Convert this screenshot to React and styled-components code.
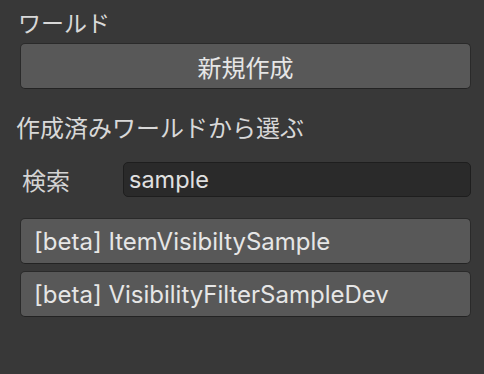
import React from "react";
import styled, { createGlobalStyle } from "styled-components";

const GlobalStyle = createGlobalStyle`
  html, body {
    margin: 0;
    padding: 0;
    background: #383838;
  }
  body {
    font-family: Inter, "Noto Sans CJK JP", sans-serif;
    color: #dcdcdc;
  }
`;

const Panel = styled.div`
  width: 484px;
  height: 374px;
  box-sizing: border-box;
  padding: 10px 13px 0 16px;
  display: flex;
  flex-direction: column;
`;

const Heading = styled.div`
  font-size: ${(p) => p.size || 24}px;
  line-height: 28px;
  margin-left: ${(p) => p.indent || 0}px;
  margin-top: ${(p) => p.top || 0}px;
  color: #d8d8d8;
`;

const Button = styled.div`
  height: 46px;
  box-sizing: border-box;
  margin-left: 4px;
  margin-top: ${(p) => p.top || 0}px;
  background: #585858;
  border: 1px solid #2a2a2a;
  border-bottom-color: #232323;
  border-radius: 5px;
  display: flex;
  align-items: center;
  justify-content: ${(p) => (p.left ? "flex-start" : "center")};
  padding: 0 13px;
  font-size: 24px;
  color: #e6e6e6;
`;

const SearchRow = styled.div`
  display: flex;
  align-items: center;
  margin: 19px 0 21px 6px;
`;

const Label = styled.div`
  width: 101px;
  font-size: 24px;
  color: #d4d4d4;
`;

const Input = styled.div`
  flex: 1;
  height: 35px;
  box-sizing: border-box;
  background: #2a2a2a;
  border: 1px solid #1e1e1e;
  border-radius: 5px;
  display: flex;
  align-items: center;
  padding: 0 5px;
  font-size: 23.5px;
  color: #e0e0e0;
`;

const List = styled.div`
  display: flex;
  flex-direction: column;
  gap: 7px;
`;

const worlds = [
  "[beta] ItemVisibiltySample",
  "[beta] VisibilityFilterSampleDev",
];

export default function App() {
  return (
    <>
      <GlobalStyle />
      <Panel>
        <Heading indent={2} size={23}>ワールド</Heading>
        <Button top={5}>新規作成</Button>
        <Heading top={26}>作成済みワールドから選ぶ</Heading>
        <SearchRow>
          <Label>検索</Label>
          <Input>sample</Input>
        </SearchRow>
        <List>
          {worlds.map((w) => (
            <Button key={w} left>
              {w}
            </Button>
          ))}
        </List>
      </Panel>
    </>
  );
}
